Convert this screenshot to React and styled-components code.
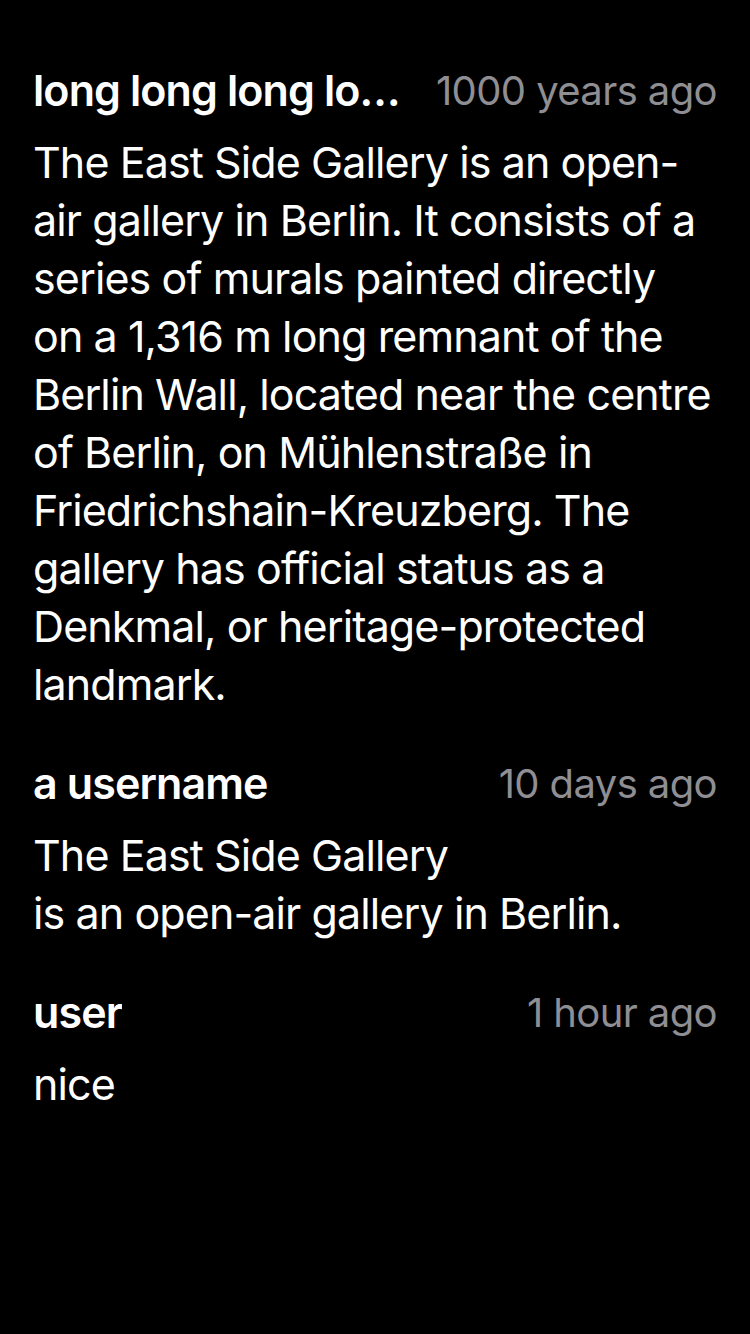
import React from 'react'
import styled, { createGlobalStyle } from 'styled-components'

const GlobalStyle = createGlobalStyle`
  html, body {
    margin: 0;
    padding: 0;
    background: #000000;
  }
  body {
    font-family: Inter, "Noto Sans", "Liberation Sans", sans-serif;
    -webkit-font-smoothing: antialiased;
  }
`

const Page = styled.div`
  min-height: 1334px;
  background: #000000;
  padding: 61px 33px 0 33px;
  box-sizing: border-box;
`

const CommentList = styled.div`
  display: flex;
  flex-direction: column;
  gap: 41px;
`

const Comment = styled.div`
  display: flex;
  flex-direction: column;
  gap: 14px;
`

const Header = styled.div`
  display: flex;
  align-items: center;
  justify-content: space-between;
  gap: 24px;
  height: 58px;
`

const Username = styled.div`
  color: #ffffff;
  font-size: 43px;
  font-weight: 600;
  letter-spacing: -0.9px;
  white-space: nowrap;
  overflow: hidden;
  text-overflow: ellipsis;
  min-width: 0;
`

const Time = styled.div`
  color: #8e8e93;
  font-size: 40px;
  font-weight: 400;
  letter-spacing: -0.6px;
  white-space: nowrap;
  flex-shrink: 0;
`

const Body = styled.div`
  color: #ffffff;
  font-size: 43px;
  line-height: 58px;
  letter-spacing: -0.9px;
  white-space: pre-line;
  padding-right: 4px;
`

const comments = [
  {
    user: 'long long long long long long username',
    time: '1000 years ago',
    text: 'The East Side Gallery is an open-air gallery in Berlin. It consists of a series of murals painted directly on a 1,316 m long remnant of the Berlin Wall, located near the centre of Berlin, on Mühlenstraße in Friedrichshain-Kreuzberg. The gallery has official status as a Denkmal, or heritage-protected landmark.',
  },
  {
    user: 'a username',
    time: '10 days ago',
    text: 'The East Side Gallery\nis an open-air gallery in Berlin.',
  },
  {
    user: 'user',
    time: '1 hour ago',
    text: 'nice',
  },
]

const App = () => {
  return (
    <Page>
      <GlobalStyle />
      <CommentList>
        {comments.map((c, i) => (
          <Comment key={i}>
            <Header>
              <Username>{c.user}</Username>
              <Time>{c.time}</Time>
            </Header>
            <Body>{c.text}</Body>
          </Comment>
        ))}
      </CommentList>
    </Page>
  )
}

export default App
